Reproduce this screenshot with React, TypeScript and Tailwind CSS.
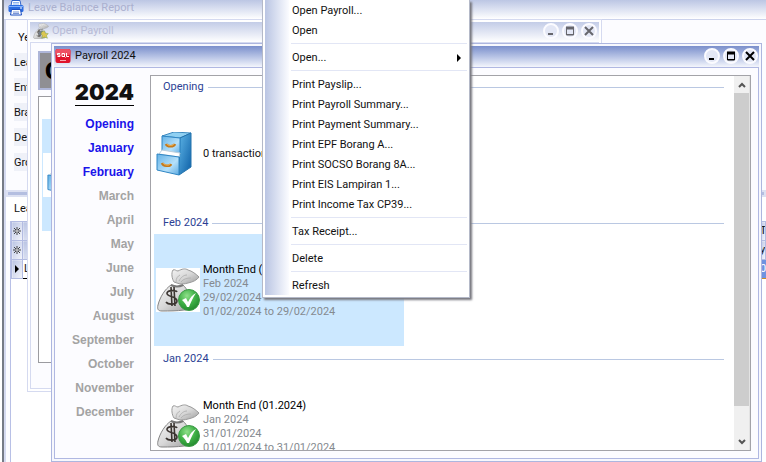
import React from "react";

function PrinterIcon() {
  return (
    <svg className="size-4 shrink-0" viewBox="0 0 16 16" aria-hidden="true">
      <path d="M4 0.500h8l1 5H3z" fill="#fff" stroke="#2f62c8" />
      <path d="M5 2.500h6M5 4h6" stroke="#8fb4f0" />
      <rect x="0.500" y="5" width="15" height="7" rx="1.500" fill="#2b6be0" />
      <path d="M1 6.500h14" stroke="#7fb0ff" />
      <path d="M3.500 9.500h9l1 5.500h-11z" fill="#fff" stroke="#1d4fc0" />
      <path d="M5 12h6M5 13.500h6" stroke="#7a96d8" />
      <rect x="12" y="7.500" width="2" height="1" fill="#fff" />
    </svg>
  );
}

function PayrollIcon() {
  return (
    <svg className="size-4 shrink-0" viewBox="0 0 16 16" aria-hidden="true">
      <rect x="0.500" y="1" width="15" height="14" rx="2" fill="#e0142c" />
      <rect x="0.500" y="1" width="15" height="6" rx="2" fill="#ee5063" />
      <path d="M5 5.500H2.500v1.500H5v1.500H2.500M7 5.500h2.500v3H7zM9 8l1.500 1.500M11.500 5v3.500H14" fill="none" stroke="#fff" />
      <path d="M5 12.500h6" stroke="#f8a8b0" />
    </svg>
  );
}

function MoneyBag({ className, badge }: { className: string; badge: "tick" | "star" }) {
  const id = React.useId();
  return (
    <svg className={className} viewBox="0 0 44 44" aria-hidden="true">
      <defs>
        <linearGradient id={id + "b"} x1="0" y1="0" x2="1" y2="1">
          <stop offset="0" stopColor="#f4f4f4" />
          <stop offset="0.500" stopColor="#d8d8d8" />
          <stop offset="1" stopColor="#9c9c9c" />
        </linearGradient>
        <radialGradient id={id + "g"} cx="0.400" cy="0.300" r="0.800">
          <stop offset="0" stopColor="#8fe08a" />
          <stop offset="0.500" stopColor="#3fb046" />
          <stop offset="1" stopColor="#1c8028" />
        </radialGradient>
      </defs>
      <path
        d="M18 14C16 11 15 5 17 2c2-1 3 1 5 1 4-2 7-3 10-1 4 1 8 4 11 7-2 3-6 5-11 6-3 1-6 1-8 1z"
        fill={"url(#" + id + "b)"}
        stroke="#9a9a9a"
      />
      <path d="M20 14c0-4 2-6 4-7M25 14c2-3 6-4 10-4M23 13c2-4 5-6 8-6" fill="none" stroke="#b4b4b4" />
      <path
        d="M15 17c4 2 8 2 12 0 4 4 8 10 8 17 0 6-1 8-7 8-7 1-15 1-22 1-4 0-5-2-4-6 2-8 7-16 13-20z"
        fill={"url(#" + id + "b)"}
        stroke="#858585"
      />
      <path d="M15 17c4 2 8 2 12 0" fill="none" stroke="#777" strokeWidth="2" />
      <path
        d="M21 24c-1-2-9-2-10 1-1 4 10 3 10 8 0 4-9 4-11 1M15 19l1 19M18 19l1 19"
        fill="none"
        stroke="#3a3430"
        strokeWidth="1.600"
      />
      {badge === "tick" ? (
        <>
          <circle cx="33" cy="32" r="10.500" fill={"url(#" + id + "g)"} stroke="#3c9a46" />
          <path d="M26 32l4-2 2 4c2-4 4-7 8-9-3 4-5 9-7 14h-2c-1-3-3-5-5-7z" fill="#fff" />
        </>
      ) : (
        <>
          <path d="M16 24l10-4 3 6-6 6-8 2z" fill="#77808a" />
          <path d="M24 24l8-2 2 6 8 1-5 6 3 7-8-3-8 3 2-7-4-5z" fill="#dcc650" stroke="#5f9440" />
        </>
      )}
    </svg>
  );
}

function Cabinet({ className }: { className: string }) {
  const id = React.useId();
  return (
    <svg className={className} viewBox="0 0 44 44" aria-hidden="true">
      <defs>
        <linearGradient id={id + "s"} x1="0" y1="0" x2="1" y2="1">
          <stop offset="0" stopColor="#5db4e6" />
          <stop offset="1" stopColor="#0d5fa6" />
        </linearGradient>
        <linearGradient id={id + "f"} x1="0" y1="0" x2="1" y2="1">
          <stop offset="0" stopColor="#64b2e6" />
          <stop offset="0.600" stopColor="#b5e0fa" />
          <stop offset="1" stopColor="#5ca9e0" />
        </linearGradient>
      </defs>
      <path d="M6 4L18 0l17 1-11 5z" fill="#8fd0f2" stroke="#3c88bf" />
      <path d="M24 6l11-5v34L23 43z" fill={"url(#" + id + "s)"} stroke="#2272ac" />
      <path d="M6 4l18 2v17L6 19z" fill={"url(#" + id + "f)"} stroke="#2f86c4" />
      <path d="M3 22l3-4 18 3-1 4z" fill="#fff" stroke="#b9cedd" />
      <path d="M1 22l22 3v18L1 38z" fill={"url(#" + id + "f)"} stroke="#2f86c4" />
      <path d="M10 12c1 3 8 3 9 0M6 31c1 3 8 4 9 1" fill="none" stroke="#c47a1c" strokeWidth="2.500" />
      <path d="M11 12c1 2 6 2 7 0M7 31c1 2 6 3 7 1" fill="none" stroke="#f0b860" />
    </svg>
  );
}

function WindowButtons({ active }: { active: boolean }) {
  const round =
    "grid size-4 place-items-center rounded-full border-2 border-[#fbfbff] bg-[#e3e7f5] " +
    (active ? "text-black" : "text-[#66666c]");
  return (
    <div className="flex gap-[3px]">
      <button type="button" aria-label="Minimize" className={round}>
        <svg className="size-3" viewBox="0 0 12 12"><path d="M3 9h5" stroke="currentColor" strokeWidth="2" /></svg>
      </button>
      <button type="button" aria-label="Maximize" className={round}>
        <svg className="size-3" viewBox="0 0 12 12">
          <path d="M2.500 2v8h7V2" fill="none" stroke="currentColor" />
          <path d="M2 3h8" stroke="currentColor" strokeWidth="3" />
          <path d="M2 9.500h8" stroke="currentColor" />
        </svg>
      </button>
      <button type="button" aria-label="Close" className={round}>
        <svg className="size-3" viewBox="0 0 12 12"><path d="M2 2l8 8M10 2l-8 8" stroke="currentColor" strokeWidth="2" /></svg>
      </button>
    </div>
  );
}

const filters = ["Year", "Leave", "Entitlement", "Branch", "Department", "Group"];

function GridMark() {
  return (
    <svg className="mx-auto size-2" viewBox="0 0 8 8" aria-hidden="true">
      <path d="M4 0v8M0 4h8M1 1l6 6M7 1L1 7" stroke="#444" />
      <circle cx="4" cy="4" r="1" fill="#ddd" />
    </svg>
  );
}

function ReportWindow() {
  const head = "h-[19px] border border-[#b3bce2] bg-linear-to-br from-[#bcc6e4] to-[#f6f7fc] p-0 font-normal";
  return (
    <section className="flex h-full flex-col border-l-2 border-[#767b86] bg-[#fcfcff]">
      <header className="flex h-5 shrink-0 items-start gap-1 border-b border-[#ccd3ec] bg-linear-to-b from-[#bcc6e4] to-white pl-1 text-[#abb0cf]">
        <PrinterIcon />
        <h1 className="leading-4">Leave Balance Report</h1>
      </header>
      <div className="flex min-h-0 grow flex-col border-l-2 border-[#d5daf0]">
        <div className="flex h-[170px] shrink-0 flex-col gap-[7px] pt-2 pl-2">
          {filters.map((name, i) => (
            <div key={name} className={i === 0 ? "h-[18px] w-20 pl-1 leading-5" : "h-[18px] w-20 bg-[#eff1f8] leading-5"}>
              {name}
            </div>
          ))}
        </div>
        <div className="h-[7px] shrink-0 border-2 border-[#dde1f2] bg-[#b4bee0]" />
        <div className="h-6 shrink-0 bg-white pl-2 leading-6">Leave</div>
        <div className="ml-1 min-h-0 grow border-l border-[#b8c0e6] bg-white">
          <table className="w-full table-fixed border-collapse">
            <colgroup>
              <col className="w-[11px]" />
              <col />
              <col className="w-[6px]" />
            </colgroup>
            <tbody>
              <tr><th className={head}><GridMark /></th><th className={head} /><th className={head + " overflow-hidden"}>T</th></tr>
              <tr><th className={head}><GridMark /></th><th className={head} /><th className={head + " overflow-hidden"}>y</th></tr>
              <tr>
                <th className={head}>
                  <svg className="mx-auto size-2" viewBox="0 0 8 8" aria-hidden="true"><path d="M2 0l4 4-4 4z" fill="#000" /></svg>
                </th>
                <td className="h-[19px] border border-black p-0 pl-px leading-4">L</td>
                <td className="overflow-hidden border-y border-[#c98b2b] bg-[#6f92e0] p-0 leading-4 text-white">0</td>
              </tr>
            </tbody>
          </table>
        </div>
      </div>
    </section>
  );
}

function OpenPayrollWindow() {
  return (
    <section className="absolute top-[19px] left-[27px] flex h-[373px] w-[575px] flex-col border border-[#d5daf0] bg-white p-[2px]">
      <header className="flex h-5 shrink-0 items-center justify-between bg-linear-to-b from-[#c3cce7] to-white pr-[2px] pb-[2px] pl-[3px] text-[#b6bad6]">
        <div className="flex items-center gap-[3px]">
          <MoneyBag className="size-4" badge="star" />
          <h2>Open Payroll</h2>
        </div>
        <WindowButtons active={false} />
      </header>
      <div className="flex min-h-0 grow flex-col gap-[6px] border border-[#d5daf0] bg-[#fcfcff] px-[7px] pt-2 pb-[25px]">
        <div className="h-[39px] shrink-0 border-2 border-[#aeb6d8] bg-[#8f8f93] pl-[5px] text-2xl font-black leading-9 text-black">Open</div>
        <div className="grow border border-[#9b9ba0] bg-white pt-[22px] pl-[3px]">
          <div className="flex h-28 w-64 items-center bg-[#cce8ff] pl-px">
            <Cabinet className="size-11 bg-white pl-1" />
          </div>
        </div>
      </div>
    </section>
  );
}

const periods = ["Opening", "January", "February", "March", "April", "May", "June", "July", "August", "September", "October", "November", "December"];

function Group({ title, children }: { title: string; children: React.ReactNode }) {
  return (
    <section className="shrink-0">
      <div className="flex h-[22px] items-center gap-1 pr-[10px] pl-[9px]">
        <h3 className="text-[#2c3f94]">{title}</h3>
        <div className="h-px grow bg-[#bac8e2]" />
      </div>
      {children}
    </section>
  );
}

function MonthItem({ title, month, end, range, selected }: { title: string; month: string; end: string; range: string; selected: boolean }) {
  return (
    <div className={"flex h-28 w-[250px] items-center gap-[3px] pl-[2px] " + (selected ? "bg-[#cce8ff]" : "")}>
      <MoneyBag className="size-11 shrink-0 bg-white" badge="tick" />
      <div className="pt-[2px] leading-[14px] whitespace-nowrap text-[#858a90]">
        <p className="text-black">{title}</p>
        <p>{month}</p>
        <p>{end}</p>
        <p>{range}</p>
      </div>
    </div>
  );
}

function PayrollWindow() {
  return (
    <section className="absolute top-[43px] right-1 bottom-0 left-[51px] flex flex-col border border-[#adb6df] bg-[#f7f8fd] p-[2px]">
      <header className="flex h-[21px] shrink-0 items-center justify-between bg-linear-to-b from-[#7b8fcb] to-[#f4f6fc] pr-px pb-[2px] pl-px">
        <div className="flex items-center gap-1">
          <PayrollIcon />
          <h2>Payroll 2024</h2>
        </div>
        <WindowButtons active />
      </header>
      <div className="flex min-h-0 grow border border-[#b0b8e2] bg-[#fcfcff] pt-[7px] pr-[7px] pb-[7px]">
        <nav className="flex w-[95px] shrink-0 flex-col items-end pr-4 font-['Liberation_Sans',Arial,sans-serif]">
          <h1 className="mt-[5px] mb-[6px] border-b border-black font-['Inter',sans-serif] text-[22px] leading-[25px] font-black">2024</h1>
          {periods.map((name, i) => (
            <a key={name} href={"#" + name} className={"h-6 text-[12px] leading-6 font-bold " + (i < 3 ? "text-[#1a14ea]" : "text-[#a3a3a3]")}>
              {name}
            </a>
          ))}
        </nav>
        <div className="flex min-w-0 grow border border-[#a3a3a8] bg-white">
          <div className="flex min-w-0 grow flex-col gap-[2px] overflow-hidden pl-[3px]">
            <Group title="Opening">
              <div className="flex h-28 w-[250px] items-center gap-[3px] pl-[2px]">
                <Cabinet className="size-11 shrink-0" />
                <p>0 transactions</p>
              </div>
            </Group>
            <Group title="Feb 2024">
              <MonthItem title="Month End (02.2024)" month="Feb 2024" end="29/02/2024" range="01/02/2024 to 29/02/2024" selected />
            </Group>
            <Group title="Jan 2024">
              <MonthItem title="Month End (01.2024)" month="Jan 2024" end="31/01/2024" range="01/01/2024 to 31/01/2024" selected={false} />
            </Group>
          </div>
          <div className="flex w-4 shrink-0 flex-col border-r border-[#e3e3e3] bg-[#f0f0f0]">
            <button type="button" aria-label="Scroll up" className="grid h-[17px] place-items-center">
              <svg className="size-2" viewBox="0 0 8 8"><path d="M1 6l3-3 3 3" fill="none" stroke="#555" strokeWidth="2" /></svg>
            </button>
            <div className="min-h-0 grow pb-[27px]">
              <div className="h-full bg-[#cdcdcd]" />
            </div>
            <button type="button" aria-label="Scroll down" className="grid h-[17px] place-items-center">
              <svg className="size-2" viewBox="0 0 8 8"><path d="M1 2l3 3 3-3" fill="none" stroke="#555" strokeWidth="2" /></svg>
            </button>
          </div>
        </div>
      </div>
    </section>
  );
}

const menuGroups = [
  ["Open Payroll...", "Open"],
  ["Open..."],
  [
    "Print Payslip...",
    "Print Payroll Summary...",
    "Print Payment Summary...",
    "Print EPF Borang A...",
    "Print SOCSO Borang 8A...",
    "Print EIS Lampiran 1...",
    "Print Income Tax CP39...",
  ],
  ["Tax Receipt..."],
  ["Delete"],
  ["Refresh"],
];

function ContextMenu() {
  return (
    <div role="menu" className="absolute top-0 left-[262px] flex w-[208px] border-x border-b border-[#b4b9c8] bg-white pr-[2px] pb-[2px] pl-[2px] shadow-[2px_2px_2px_#77777f]">
      <div className="w-6 shrink-0 bg-linear-to-r from-[#bac5e3] to-[#fbfcff]" />
      <div className="grow pl-[2px]">
        {menuGroups.map((items, g) => (
          <div key={items[0]}>
            {g > 0 && <div role="separator" className="my-[3px] h-px bg-[#e2e6f5]" />}
            {items.map((label) => (
              <button key={label} type="button" role="menuitem" className="flex h-5 w-full items-center justify-between pt-[2px] pr-[4px] pl-px text-left">
                {label}
                {label === "Open..." && (
                  <svg className="size-2" viewBox="0 0 8 8" aria-hidden="true"><path d="M2 0l4 4-4 4z" fill="#000" /></svg>
                )}
              </button>
            ))}
          </div>
        ))}
      </div>
    </div>
  );
}

export default function App() {
  return (
    <main className="relative h-screen overflow-hidden bg-white pl-[2px] font-[Roboto,'Noto_Sans',sans-serif] text-[11px] leading-4 text-[#111]">
      <ReportWindow />
      <OpenPayrollWindow />
      <PayrollWindow />
      <ContextMenu />
    </main>
  );
}
